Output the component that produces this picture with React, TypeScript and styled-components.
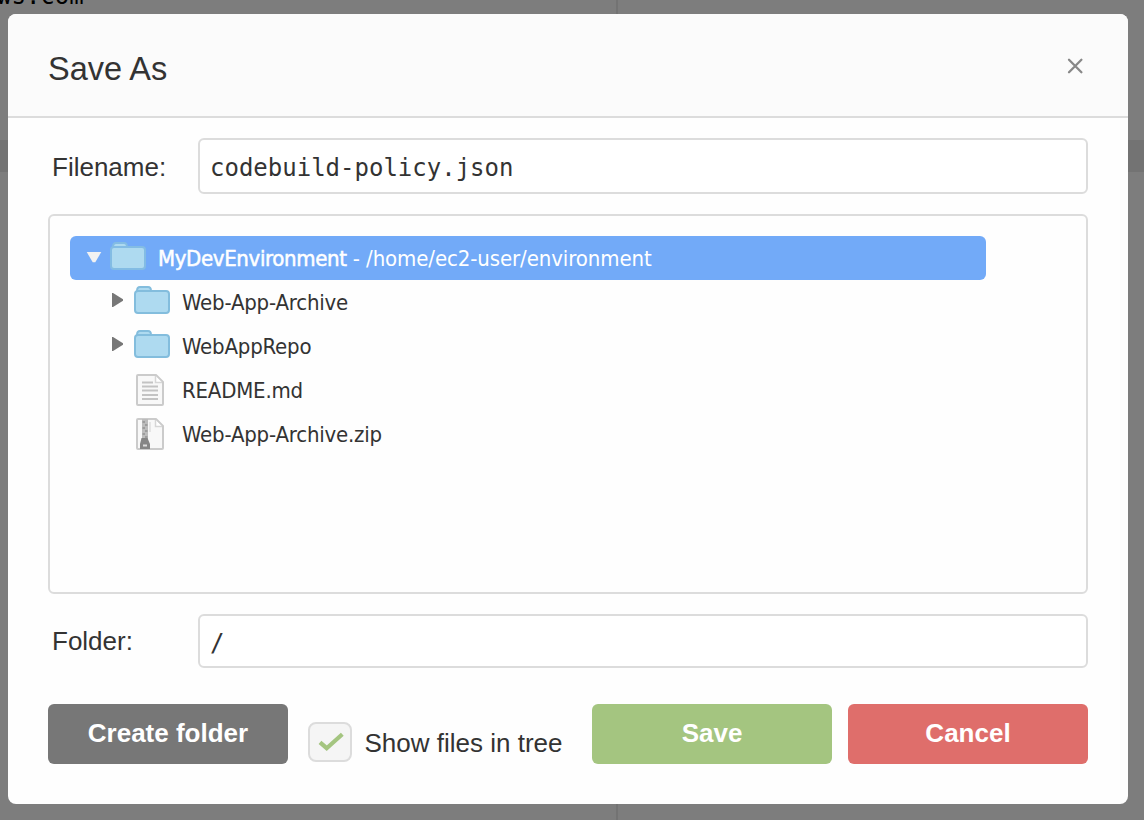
import React from "react";
import styled, { createGlobalStyle } from "styled-components";

const GlobalStyle = createGlobalStyle`
  *, *::before, *::after { box-sizing: border-box; }
  body {
    margin: 0;
    overflow: hidden;
    background: #7d7d7d;
    color: #333;
    font-family: "Liberation Sans", Helvetica, Arial, sans-serif;
    -webkit-font-smoothing: antialiased;
  }
`;

const Page = styled.main`
  position: relative;
  width: 1144px;
  height: 820px;
  padding: 14px 16px 16px 8px;
  overflow: hidden;
`;

const Backdrop = styled.div`
  position: absolute;
  inset: 0;
  display: flex;
  flex-direction: column;
`;

const EditorTop = styled.div`
  height: 140px;
  padding-left: 616px;
`;

const EditorBand = styled.div`
  height: 32px;
  background: #737373;
`;

const EditorBottom = styled.div`
  flex: 1;
  padding-left: 616px;
`;

const Divider = styled.div`
  width: 2px;
  height: 100%;
  background: #737373;
`;

const TerminalText = styled.span`
  position: absolute;
  left: -3px;
  top: -18px;
  color: #000;
  font: 24px/28px "DejaVu Sans Mono", monospace;
`;

const Dialog = styled.section`
  position: relative;
  display: flex;
  flex-direction: column;
  height: 790px;
  overflow: hidden;
  border-radius: 8px;
  background: #fefefe;
`;

const Header = styled.header`
  display: flex;
  align-items: center;
  justify-content: space-between;
  height: 104px;
  padding: 8px 44px 0 40px;
  border-bottom: 2px solid #dcdcdc;
  background: #fbfbfb;
`;

const Title = styled.h1`
  margin: 0;
  font-size: 32.5px;
  font-weight: 400;
  line-height: 40px;
`;

const CloseButton = styled.button`
  display: flex;
  margin-top: -6px;
  padding: 0;
  border: 0;
  background: none;
`;

const Body = styled.div`
  display: flex;
  flex-direction: column;
  padding: 20px 40px 0;
`;

const Field = styled.div<{ $height: number }>`
  display: flex;
  height: ${(p) => p.$height}px;
`;

const Label = styled.label<{ $height: number }>`
  width: 150px;
  padding-left: 4px;
  font-size: 26px;
  line-height: ${(p) => p.$height}px;
`;

const Input = styled.input`
  flex: 1;
  min-width: 0;
  padding: 3px 10px 0;
  border: 2px solid #dcdcdc;
  border-radius: 6px;
  outline: 0;
  background: #fff;
  color: #333;
  font: 24px "DejaVu Sans Mono", monospace;
`;

const Tree = styled.div`
  height: 380px;
  margin: 20px 0;
  padding: 20px 100px 20px 20px;
  border: 2px solid #dcdcdc;
  border-radius: 6px;
`;

const TreeRow = styled.div<{ $selected?: boolean; $depth: number }>`
  display: flex;
  height: 44px;
  padding-left: ${(p) => 16 + p.$depth * 24}px;
  border-radius: 6px;
  background: ${(p) => (p.$selected ? "#72aaf8" : "transparent")};
  color: ${(p) => (p.$selected ? "#fff" : "#333")};
`;

const ArrowSlot = styled.span`
  display: flex;
  width: 24px;
  height: 44px;
`;

const IconSlot = styled.span`
  display: flex;
  width: 48px;
  height: 44px;
`;

const TreeName = styled.span<{ $spacing?: number; $strong?: boolean }>`
  font-family: "DejaVu Sans Condensed", "DejaVu Sans", Tahoma, sans-serif;
  font-stretch: condensed;
  font-size: 22px;
  line-height: 46px;
  letter-spacing: ${(p) => p.$spacing ?? -0.2}px;
  -webkit-text-stroke: ${(p) => (p.$strong ? "0.5px #fff" : "0")};
  white-space: pre;
`;

const Actions = styled.footer`
  display: flex;
  height: 60px;
  margin-top: 36px;
`;

const Button = styled.button<{ $color: string }>`
  width: 240px;
  height: 60px;
  padding: 0 0 2px;
  border: 0;
  border-radius: 6px;
  background: ${(p) => p.$color};
  color: #fff;
  font: bold 26px "Liberation Sans", Helvetica, Arial, sans-serif;
`;

const CheckOption = styled.label`
  display: flex;
  flex: 1;
  gap: 12.5px;
  padding: 18px 0 0 20px;
  font-size: 26px;
  line-height: 42px;
  white-space: nowrap;
`;

const CheckBox = styled.span`
  display: flex;
  width: 44px;
  height: 40px;
  border: 2px solid #dcdcdc;
  border-radius: 8px;
  background: #f5f5f5;
`;

const DialogButtons = styled.div`
  display: flex;
  gap: 16px;
`;

const Arrow = ({ open }: { open?: boolean }) => (
  <svg width="24" height="44">
    {open ? <path d="M0.7 16H15.3L9.3 26.2H6.7Z" fill="#f2f2f2" /> : <path d="M2 13H3L13 19.3V20.7L3 27H2Z" fill="#777" />}
  </svg>
);

const Folder = ({ selected }: { selected?: boolean }) => (
  <svg width="48" height="44" fill="#aedaf0" stroke={selected ? "#83bce4" : "#83bddd"} strokeWidth="2">
    <path d="M3 12V11Q3 7 6 7H14Q17 7 17 11V12" />
    <rect x="1" y="11" width="34" height="22" rx="3" />
  </svg>
);

const FileIcon = ({ zip }: { zip?: boolean }) => (
  <svg width="48" height="44">
    <path d="M4 7H22L29 14V36Q29 37 28 37H4Q3 37 3 36V8Q3 7 4 7Z" fill="#f8f8f8" stroke="#cbcbcb" strokeWidth="2" strokeLinejoin="round" />
    <path d="M21.5 8V14.5H28" fill="#fff" stroke="#d6d6d6" strokeWidth="1.5" />
    {zip ? (
      <>
        <path d="M8 7H14V27H8Z" fill="#bcbcbc" />
        <path d="M8.5 10H11M11 13H13.5M8.5 16H11M11 19H13.5M8.5 22H11M11 25H13.5" stroke="#929292" strokeWidth="1.6" />
        <path d="M16 10V20" stroke="#e5e5e5" strokeWidth="2" />
        <path d="M7.5 26H13.5L16 32V37H6V32Z" fill="#858585" />
        <path d="M9 33.5H13" stroke="#ddd" strokeWidth="2" />
      </>
    ) : (
      <path d="M8 14.5H19M8 18.5H24M8 22.5H24M8 27H24M8 31H24" stroke="#c3c3c3" strokeWidth="2" />
    )}
  </svg>
);

export default function App() {
  return (
    <Page>
      <GlobalStyle />
      <Backdrop>
        <EditorTop><Divider /></EditorTop>
        <EditorBand />
        <EditorBottom><Divider /></EditorBottom>
        <TerminalText>ws.com</TerminalText>
      </Backdrop>
      <Dialog>
        <Header>
          <Title>Save As</Title>
          <CloseButton aria-label="Close">
            <svg width="17" height="16" stroke="#888" strokeWidth="2.3" strokeLinecap="round"><path d="M2 1.8L14.4 14.2M14.4 1.8L2 14.2" /></svg>
          </CloseButton>
        </Header>
        <Body>
          <Field $height={56}>
            <Label $height={58}>Filename:</Label>
            <Input defaultValue="codebuild-policy.json" />
          </Field>
          <Tree>
            <TreeRow $depth={0} $selected>
              <ArrowSlot><Arrow open /></ArrowSlot>
              <IconSlot><Folder selected /></IconSlot>
              <TreeName $spacing={-0.35} $strong>MyDevEnvironment</TreeName>
              <TreeName $spacing={-0.1}> - /home/ec2-user/environment</TreeName>
            </TreeRow>
            <TreeRow $depth={1}>
              <ArrowSlot><Arrow /></ArrowSlot>
              <IconSlot><Folder /></IconSlot>
              <TreeName>Web-App-Archive</TreeName>
            </TreeRow>
            <TreeRow $depth={1}>
              <ArrowSlot><Arrow /></ArrowSlot>
              <IconSlot><Folder /></IconSlot>
              <TreeName>WebAppRepo</TreeName>
            </TreeRow>
            <TreeRow $depth={1}>
              <ArrowSlot />
              <IconSlot><FileIcon /></IconSlot>
              <TreeName>README.md</TreeName>
            </TreeRow>
            <TreeRow $depth={1}>
              <ArrowSlot />
              <IconSlot><FileIcon zip /></IconSlot>
              <TreeName>Web-App-Archive.zip</TreeName>
            </TreeRow>
          </Tree>
          <Field $height={54}>
            <Label $height={54}>Folder:</Label>
            <Input defaultValue="/" />
          </Field>
          <Actions>
            <Button $color="#777">Create folder</Button>
            <CheckOption>
              <CheckBox>
                <svg width="40" height="36" fill="none" stroke="#a4c580" strokeWidth="4.2"><path d="M10 18.3L16.7 24.2L32.3 10.3" /></svg>
              </CheckBox>
              Show files in tree
            </CheckOption>
            <DialogButtons>
              <Button $color="#a4c580">Save</Button>
              <Button $color="#df6e6b">Cancel</Button>
            </DialogButtons>
          </Actions>
        </Body>
      </Dialog>
    </Page>
  );
}
